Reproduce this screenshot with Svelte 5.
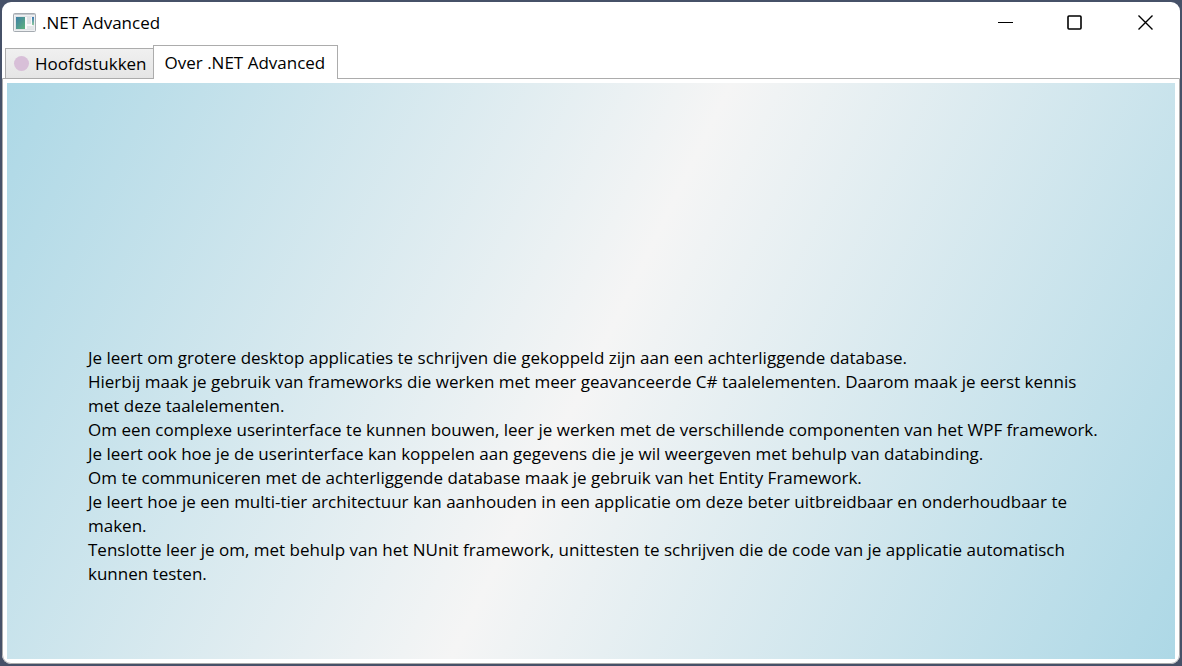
<script>
  const tabs = [
    { id: 'chapters', label: 'Hoofdstukken', dot: true },
    { id: 'about', label: 'Over .NET Advanced', dot: false }
  ];
  const paragraphs = [
    'Je leert om grotere desktop applicaties te schrijven die gekoppeld zijn aan een achterliggende database.',
    'Hierbij maak je gebruik van frameworks die werken met meer geavanceerde C# taalelementen. Daarom maak je eerst kennis met deze taalelementen.',
    'Om een complexe userinterface te kunnen bouwen, leer je werken met de verschillende componenten van het WPF framework.',
    'Je leert ook hoe je de userinterface kan koppelen aan gegevens die je wil weergeven met behulp van databinding.',
    'Om te communiceren met de achterliggende database maak je gebruik van het Entity Framework.',
    'Je leert hoe je een multi-tier architectuur kan aanhouden in een applicatie om deze beter uitbreidbaar en onderhoudbaar te maken.',
    'Tenslotte leer je om, met behulp van het NUnit framework, unittesten te schrijven die de code van je applicatie automatisch kunnen testen.'
  ];
  let active = $state('about');
</script>

<div class="desktop">
  <main class="window">
    <header class="titlebar">
      <svg class="app-icon" width="24" height="20" viewBox="0 0 24 20" aria-hidden="true">
        <defs>
          <linearGradient id="pane" x1="0" y1="0" x2="1" y2="1">
            <stop offset="0" stop-color="#3f7fa6" />
            <stop offset="1" stop-color="#5fb37c" />
          </linearGradient>
          <linearGradient id="side" x1="0" y1="0" x2="0" y2="1">
            <stop offset="0" stop-color="#3c78b4" />
            <stop offset="1" stop-color="#8ccb9c" />
          </linearGradient>
        </defs>
        <rect x="0.5" y="0.5" width="22" height="18" rx="1" fill="#eef0f2" stroke="#a5abb1" />
        <path d="M1 1.5h21" stroke="#c5c9ce" />
        <rect x="2.5" y="3.5" width="18" height="13" fill="#f9f9fa" stroke="#e0e3e6" />
        <rect x="3" y="4" width="9" height="12" fill="url(#pane)" />
        <rect x="14" y="4" width="4" height="7" fill="#dfe2e5" />
        <rect x="19" y="4" width="2" height="8" fill="url(#side)" />
        <rect x="14" y="13" width="7" height="3" fill="#e3e6e8" />
      </svg>
      <h1>.NET Advanced</h1>
      <div class="controls">
        <button type="button" aria-label="Minimaliseren">
          <svg width="16" height="16" viewBox="0 0 16 16"><path d="M1 7.5h15" /></svg>
        </button>
        <button type="button" aria-label="Maximaliseren">
          <svg width="16" height="16" viewBox="0 0 16 16"><rect x="1" y="1" width="13" height="13" rx="1" stroke-width="1.6" /></svg>
        </button>
        <button type="button" aria-label="Sluiten">
          <svg width="16" height="16" viewBox="0 0 16 16"><path d="M1.5 .5l14 14M15.5 .5L1.500 14.500" stroke-width="1.4" /></svg>
        </button>
      </div>
    </header>

    <div class="tabs" role="tablist">
      {#each tabs as tab}
        <button
          type="button"
          role="tab"
          class="tab"
          class:active={active === tab.id}
          aria-selected={active === tab.id}
          onclick={() => (active = tab.id)}
        >
          {#if tab.dot}<span class="dot"></span>{/if}
          {tab.label}
        </button>
      {/each}
    </div>

    <section class="frame" role="tabpanel">
      <div class="panel">
        {#if active === 'about'}
          {#each paragraphs as text}
            <p>{text}</p>
          {/each}
        {/if}
      </div>
    </section>
  </main>
</div>

<style>
  .desktop {
    box-sizing: border-box;
    display: flex;
    min-height: 100vh;
    padding: 2px;
    background: #465168;
    font-family: 'Open Sans', 'Noto Sans', sans-serif;
    font-size: 17px;
    line-height: 24px;
    color: #000;
  }
  .window {
    flex: 1;
    display: flex;
    flex-direction: column;
    min-width: 0;
    background: #fff;
    border-radius: 9px;
    overflow: hidden;
  }
  .titlebar {
    display: flex;
    align-items: center;
    height: 41px;
    padding-left: 11px;
  }
  h1 {
    flex: 1;
    margin: 0 0 0 5px;
    font-size: 17px;
    font-weight: 400;
    line-height: 24px;
  }
  .controls {
    display: flex;
    height: 100%;
  }
  button {
    border: 0;
    padding: 0;
    background: none;
    font: inherit;
    color: inherit;
  }
  .controls button {
    display: flex;
    align-items: center;
    justify-content: center;
    width: 70px;
  }
  .controls svg {
    fill: none;
    stroke: #000;
  }
  .tabs {
    display: flex;
    align-items: flex-end;
    padding-left: 3px;
    height: 35px;
  }
  .tab {
    box-sizing: border-box;
    display: flex;
    align-items: center;
    gap: 6px;
    height: 30px;
    padding: 0 6px 0 8px;
    border: 1px solid #acacac;
    border-bottom: 0;
    background: linear-gradient(#f0f0f0, #e5e5e5);
    white-space: nowrap;
  }
  .tab:not(.active) {
    border-right: 0;
  }
  .tab.active {
    z-index: 1;
    height: 34px;
    margin-bottom: -1px;
    padding: 0 12px 0 11px;
    background: #fff;
  }
  .dot {
    width: 15px;
    height: 15px;
    border-radius: 50%;
    background: #d8bfd8;
  }
  .frame {
    flex: 1;
    display: flex;
    padding: 4px;
    border: 1px solid #acacac;
    border-radius: 0 0 9px 9px;
  }
  .panel {
    flex: 1;
    display: flex;
    flex-direction: column;
    justify-content: flex-end;
    padding: 0 72px 73px 81px;
    background: linear-gradient(116deg, #add8e6, #f5f5f5 50%, #add8e6);
  }
  p {
    margin: 0;
  }
</style>
